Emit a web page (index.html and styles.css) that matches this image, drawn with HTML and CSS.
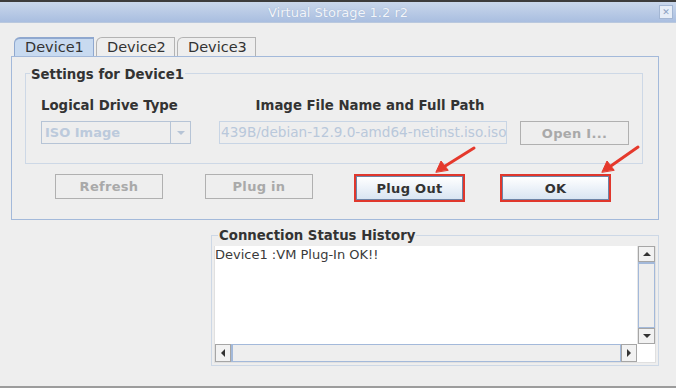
FILE: index.html
```html
<!DOCTYPE html>
<html lang="en">
<head>
    <meta charset="UTF-8">
    <title>Virtual Storage 1.2 r2</title>
    <link rel="stylesheet" href="styles.css">
</head>
<body>
    <div class="window">
        <div class="titlebar">
            <span class="title">Virtual Storage 1.2 r2</span>
            <span class="close">&#x2715;</span>
        </div>

        <div class="tabs">
            <div class="tab active">Device1</div>
            <div class="tab">Device2</div>
            <div class="tab">Device3</div>
        </div>

        <div class="tabpanel">
            <div class="group settings">
                <div class="group-title">Settings for Device1</div>
                <div class="settings-row">
                    <div class="col col-type">
                        <div class="label">Logical Drive Type</div>
                        <div class="combo">
                            <span class="combo-text">ISO Image</span>
                            <span class="combo-btn"><span class="tri-down"></span></span>
                        </div>
                    </div>
                    <div class="col col-path">
                        <div class="label center">Image File Name and Full Path</div>
                        <div class="textfield">439B/debian-12.9.0-amd64-netinst.iso.iso</div>
                    </div>
                    <div class="col col-open">
                        <button class="btn disabled">Open I...</button>
                    </div>
                </div>
            </div>

            <div class="actions">
                <button class="btn disabled">Refresh</button>
                <button class="btn disabled">Plug in</button>
                <button class="btn marked">Plug Out</button>
                <button class="btn marked ok">OK</button>
            </div>
        </div>

        <div class="group status">
            <div class="group-title">Connection Status History</div>
            <div class="scrollpane">
                <div class="viewport">
                    <div class="log">Device1 :VM Plug-In OK!!</div>
                    <div class="vscroll">
                        <span class="sb-btn"><span class="tri-up"></span></span>
                        <span class="sb-track"></span>
                        <span class="sb-btn"><span class="tri-down dark"></span></span>
                    </div>
                </div>
                <div class="hrow">
                    <div class="hscroll">
                        <span class="sb-btn h"><span class="tri-left"></span></span>
                        <span class="sb-track h"></span>
                        <span class="sb-btn h"><span class="tri-right"></span></span>
                    </div>
                    <div class="corner"></div>
                </div>
            </div>
        </div>

        <svg class="arrows" width="676" height="388" viewBox="0 0 676 388">
            <g stroke="#e5392c" stroke-width="3" stroke-linecap="round" fill="#e5392c">
                <line x1="474" y1="148" x2="442" y2="168"/>
                <polygon points="436,172 441,161 448,170" stroke-width="1"/>
                <line x1="638" y1="147" x2="608" y2="168"/>
                <polygon points="602,172 607,161 614,170" stroke-width="1"/>
            </g>
        </svg>
    </div>
</body>
</html>
```

FILE: styles.css
```css
body {
    margin: 0;
    font-family: 'DejaVu Sans', sans-serif;
    background: #eeeeee;
    color: #333333;
}

.window {
    position: relative;
    width: 676px;
    height: 388px;
    background: #eeeeee;
    border-bottom: 2px solid #9c9c9c;
    box-sizing: border-box;
    overflow: hidden;
}

.titlebar {
    height: 20px;
    border-top: 2px solid #3c3c3c;
    background: linear-gradient(#c9d7eb, #a9bee0);
    border-bottom: 1px solid #b9c8de;
    display: flex;
    align-items: center;
    justify-content: center;
    position: relative;
}

.title {
    font-size: 13px;
    color: #f2f5fa;
    text-shadow: 0 0 1px #8fa6c8;
}

.close {
    position: absolute;
    right: 3px;
    top: 3px;
    width: 12px;
    height: 12px;
    background: #e6edf7;
    border: 1px solid #a3b6d3;
    font-size: 9px;
    line-height: 12px;
    text-align: center;
    color: #8aa0c2;
}

/* tabs */
.tabs {
    display: flex;
    gap: 2px;
    margin: 14px 0 0 14px;
    height: 19px;
}

.tab {
    box-sizing: border-box;
    width: 80px;
    height: 19px;
    padding-left: 10px;
    font-size: 14.5px;
    line-height: 18px;
    color: #333333;
    border: 1px solid #b3b3b3;
    border-bottom: none;
    border-top-left-radius: 6px;
    background: #eeeeee;
}

.tab + .tab {
    width: 79px;
}

.tab.active {
    background: #c8daf0;
    border-color: #8fa8cf;
    border-top-width: 2px;
    line-height: 17px;
}

.tabpanel {
    box-sizing: border-box;
    width: 648px;
    height: 164px;
    margin-left: 11px;
    border: 1px solid #a3b9da;
    padding: 16px 15px 0 13px;
}

/* titled borders */
.group {
    box-sizing: border-box;
    border: 1px solid #cdd8e6;
}

.group-title {
    width: fit-content;
    font-size: 13.3px;
    font-weight: bold;
    line-height: 16px;
    color: #333333;
    background: #eeeeee;
    margin: -7px 0 0 4px;
    padding: 0 1px;
}

.settings {
    height: 91px;
}

.settings-row {
    display: flex;
    align-items: flex-end;
    padding: 15px 0 0 15px;
}

.label {
    font-size: 13.3px;
    font-weight: bold;
    line-height: 16px;
    margin-bottom: 7px;
    white-space: nowrap;
}

.label.center {
    text-align: center;
    padding-left: 14px;
}

.col-type {
    width: 150px;
}

.col-path {
    width: 288px;
    margin-left: 28px;
}

.col-open {
    margin-left: 13px;
}

.combo {
    box-sizing: border-box;
    height: 23px;
    border: 1px solid #b6c4d6;
    display: flex;
    background: #eeeeee;
}

.combo-text {
    flex: 1;
    font-size: 13px;
    font-weight: bold;
    line-height: 21px;
    padding-left: 3px;
    color: #bccadc;
    border-right: 1px solid #b6c4d6;
}

.combo-btn {
    width: 19px;
    display: flex;
    align-items: center;
    justify-content: center;
}

.textfield {
    box-sizing: border-box;
    height: 23px;
    border: 1px solid #c8d5e5;
    font-size: 13.6px;
    line-height: 21px;
    padding-left: 1px;
    color: #b9c8db;
    white-space: nowrap;
    overflow: hidden;
}

/* buttons */
.btn {
    box-sizing: border-box;
    width: 108px;
    height: 25px;
    font-family: 'DejaVu Sans', sans-serif;
    font-size: 13px;
    font-weight: bold;
    background: #eeeeee;
    border: 1px solid #b0b0b0;
    color: #a9a9a9;
    padding: 0;
    letter-spacing: 0.3px;
}

.col-open .btn {
    width: 109px;
    height: 24px;
    margin-bottom: -1px;
}

.actions {
    display: flex;
    gap: 42px;
    margin: 10px 0 0 30px;
}

.btn.marked {
    color: #333333;
    background: linear-gradient(#ffffff, #d9e5f2);
    border: 1px solid #6d84a6;
    outline: 2px solid #e0372c;
    outline-offset: 0;
    width: 107px;
    height: 24px;
    margin-top: 2px;
}

.actions .btn:nth-child(3) {
    margin-left: 1px;
}

.btn.ok {
    margin-left: -3px;
}

/* status history */
.status {
    width: 448px;
    height: 131px;
    margin: 15px 0 0 211px;
    padding: 0 2px 2px 2px;
}

.status .group-title {
    margin-top: -8px;
    margin-left: 4px;
}

.scrollpane {
    margin-top: 2px;
    border: 1px solid #e0e0e0;
    border-top: none;
}

.viewport {
    display: flex;
    height: 98px;
    background: #ffffff;
}

.log {
    flex: 1;
    font-size: 13px;
    line-height: 16px;
    color: #3a3a3a;
    padding-top: 1px;
}

.vscroll {
    width: 17px;
    display: flex;
    flex-direction: column;
    border-left: 1px solid #e6e6e6;
    background: #eeeeee;
}

.sb-btn {
    box-sizing: border-box;
    height: 16px;
    display: flex;
    align-items: center;
    justify-content: center;
    border: 1px solid #a6a6a6;
    background: #f2f2f2;
}

.sb-track {
    flex: 1;
    border: 1px solid #a3b9da;
    border-top-width: 2px;
    background: #eeeeee;
}

.hrow {
    display: flex;
    height: 18px;
}

.hscroll {
    flex: 1;
    display: flex;
    background: #eeeeee;
}

.sb-btn.h {
    width: 16px;
    height: 18px;
}

.sb-track.h {
    border-top-width: 1px;
    border-left-width: 2px;
}

.corner {
    width: 18px;
    background: #ffffff;
}

/* triangles */
.tri-down {
    width: 0;
    height: 0;
    border-left: 4px solid transparent;
    border-right: 4px solid transparent;
    border-top: 4px solid #b6c4d6;
}

.tri-down.dark {
    border-top-color: #333333;
}

.tri-up {
    width: 0;
    height: 0;
    border-left: 4px solid transparent;
    border-right: 4px solid transparent;
    border-bottom: 4px solid #333333;
}

.tri-left {
    width: 0;
    height: 0;
    border-top: 4px solid transparent;
    border-bottom: 4px solid transparent;
    border-right: 4px solid #333333;
}

.tri-right {
    width: 0;
    height: 0;
    border-top: 4px solid transparent;
    border-bottom: 4px solid transparent;
    border-left: 4px solid #333333;
}

.arrows {
    position: absolute;
    left: 0;
    top: 0;
    pointer-events: none;
}
```
